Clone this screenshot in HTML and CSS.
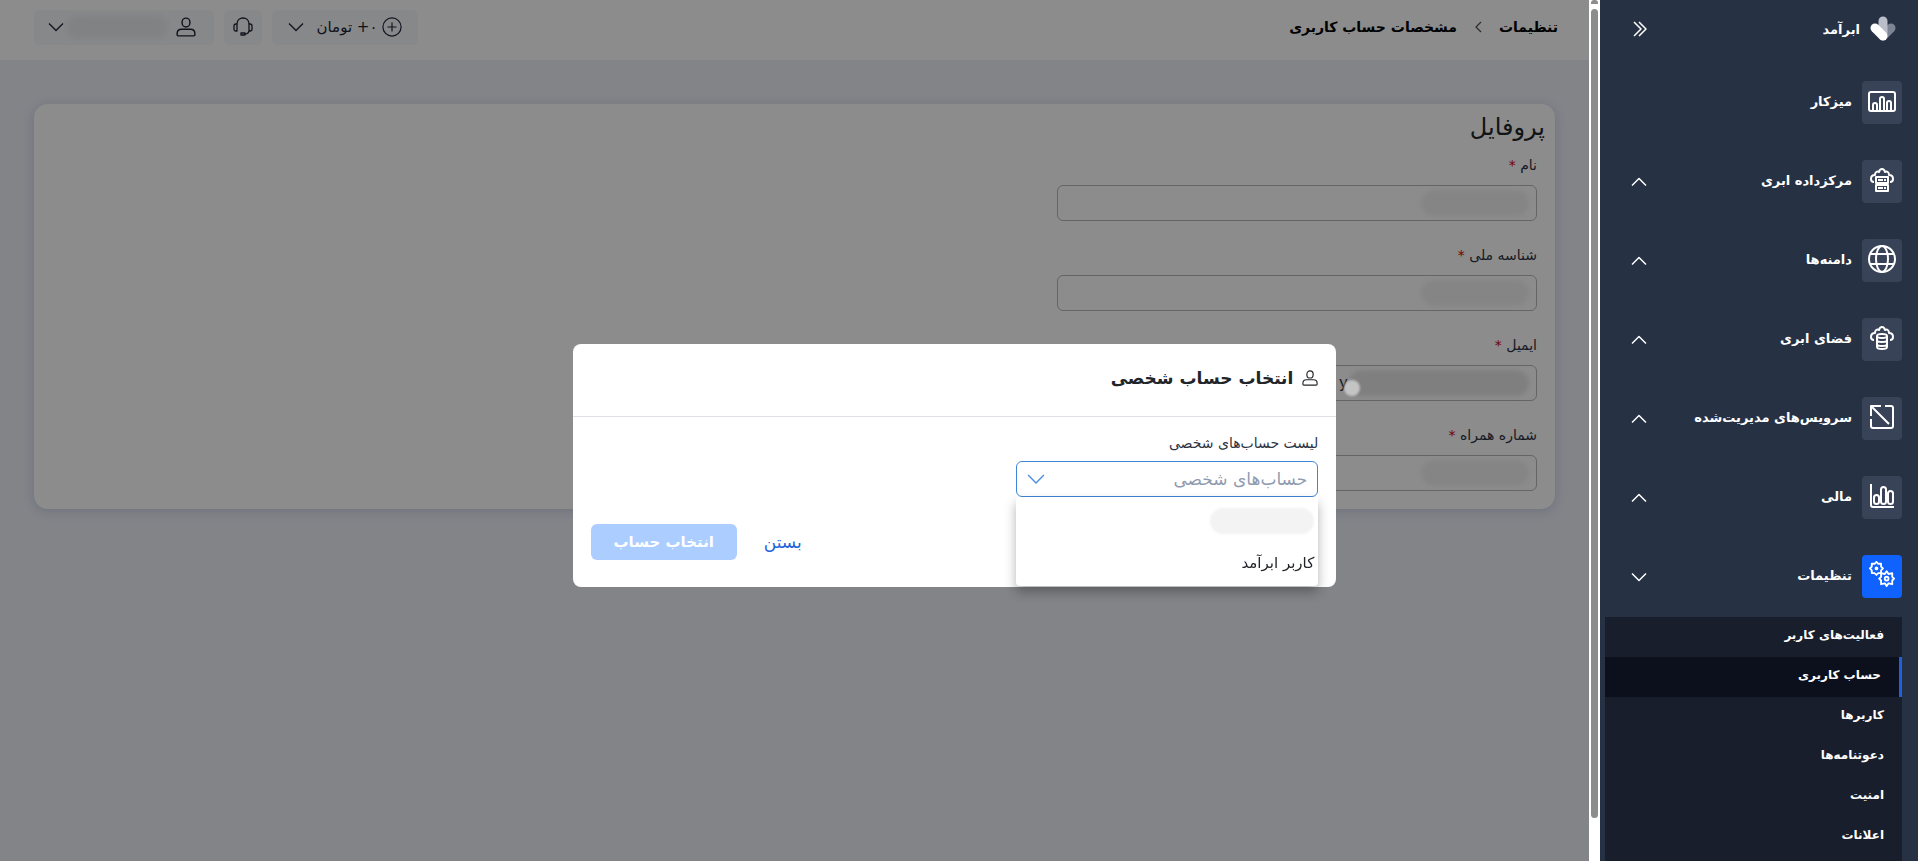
FILE: index.html
```html
<!DOCTYPE html>
<html lang="fa" dir="rtl">
<head>
  <meta charset="UTF-8" />
  <meta name="viewport" content="width=device-width, initial-scale=1.0"/>
  <title>ابرآمد - مشخصات حساب کاربری</title>
  <link rel="stylesheet" href="styles.css">
</head>
<body>
  <!-- Shared icons -->
  <svg class="sprite" aria-hidden="true">
    <symbol id="chevron" viewBox="0 0 16 16"><path d="M1 4.500l7 7 7-7"/></symbol>
    <symbol id="user" viewBox="0 0 18 18"><rect x="5.500" y="1" width="7" height="8" rx="3.500"/><path d="M5 11h8q4 0 4 4v1q0 1-1 1H2q-1 0-1-1v-1q0-4 4-4z"/></symbol>
  </svg>

  <!-- Sidebar -->
  <aside class="sidebar">
    <div class="brand">
      <svg class="logo" viewBox="0 0 26 26">
        <path d="M21 12l-8 8" stroke="#7d8594"/>
        <path d="M13 5v12" stroke="#b9bec8"/>
        <path d="M5 12l8 8" stroke="#fff"/>
      </svg>
      <span>ابرآمد</span>
      <button class="collapse" aria-label="بستن منو">
        <svg class="icon-16" viewBox="0 0 16 16"><path d="M2 1l7 7-7 7M7 1l7 7-7 7"/></svg>
      </button>
    </div>
    <nav>
      <ul class="menu">
        <li><a href="#dashboard">
          <span class="tile"><svg viewBox="0 0 28 28"><rect x="1" y="5" width="26" height="19" rx="2"/><path d="M5 23v-5q0-2 2-2t2 2v5M12 23V12q0-2 2-2t2 2v11M19 23v-7q0-2 2-2t2 2v7"/></svg></span>
          <span class="name">میزکار</span>
        </a></li>
        <li><a href="#datacenter">
          <span class="tile"><svg viewBox="0 0 28 28"><path d="M6 16c-2 0-3-1-3-3s1-4 4-4c0-3 2-4 4-3 1-4 5-4 6 0 2-1 4 0 4 3 3 0 4 2 4 4s-1 3-3 3"/><rect x="8" y="11" width="12" height="6"/><rect x="8" y="19" width="12" height="6"/><path d="M10 14h5M17 13v2M10 22h5M17 21v2"/></svg></span>
          <span class="name">مرکزداده ابری</span>
          <svg class="icon-16 up"><use href="#chevron"/></svg>
        </a></li>
        <li><a href="#domains">
          <span class="tile"><svg viewBox="0 0 28 28"><circle cx="14" cy="14" r="13"/><ellipse cx="14" cy="14" rx="6" ry="13"/><path d="M2 9h24M2 19h24"/></svg></span>
          <span class="name">دامنه‌ها</span>
          <svg class="icon-16 up"><use href="#chevron"/></svg>
        </a></li>
        <li><a href="#storage">
          <span class="tile"><svg viewBox="0 0 28 28"><path d="M6 16c-2 0-3-1-3-3s1-4 4-4c0-3 2-4 4-3 1-4 5-4 6 0 2-1 4 0 4 3 3 0 4 2 4 4s-1 3-3 3"/><ellipse cx="14" cy="12" rx="5" ry="2"/><path d="M9 12v11q0 2 5 2t5-2V12M9 16q0 2 5 2t5-2M9 20q0 2 5 2t5-2"/></svg></span>
          <span class="name">فضای ابری</span>
          <svg class="icon-16 up"><use href="#chevron"/></svg>
        </a></li>
        <li><a href="#managed">
          <span class="tile"><svg viewBox="0 0 28 28"><path d="M3 13V3h10M3 3l18 18M17 3h6q2 0 2 2v18q0 2-2 2H5q-2 0-2-2v-7"/></svg></span>
          <span class="name">سرویس‌های مدیریت‌شده</span>
          <svg class="icon-16 up"><use href="#chevron"/></svg>
        </a></li>
        <li><a href="#billing">
          <span class="tile"><svg viewBox="0 0 28 28"><path d="M3 2v21q0 2 2 2h21"/><rect x="6" y="13" width="5" height="9" rx="2.500"/><rect x="13" y="5" width="5" height="17" rx="2.500"/><rect x="20" y="9" width="5" height="13" rx="2.500"/></svg></span>
          <span class="name">مالی</span>
          <svg class="icon-16 up"><use href="#chevron"/></svg>
        </a></li>
        <li class="open"><a href="#settings">
          <span class="tile"><svg viewBox="0 0 28 28"><path d="M8 1l2 2 3 0 0 3 2 2-2 2 0 3-3 0-2 2-2-2-3 0 0-3-2-2 2-2 0-3 3 0z"/><circle cx="8" cy="8" r="1"/><path d="M19 11l2 3 4-1 0 4 2 2-2 2 0 4-4-1-2 3-2-3-4 1 0-4-2-2 2-2 0-4 4 1z"/><circle cx="19" cy="19" r="2"/></svg></span>
          <span class="name">تنظیمات</span>
          <svg class="icon-16"><use href="#chevron"/></svg>
        </a></li>
      </ul>
      <ul class="submenu">
        <li><a href="#activity">فعالیت‌های کاربر</a></li>
        <li><a href="#account" class="active">حساب کاربری</a></li>
        <li><a href="#users">کاربرها</a></li>
        <li><a href="#invites">دعوتنامه‌ها</a></li>
        <li><a href="#security">امنیت</a></li>
        <li><a href="#notices">اعلانات</a></li>
      </ul>
    </nav>
  </aside>

  <!-- Scroll bar -->
  <div class="scrollbar">
    <div class="scroll-arrow"></div>
    <div class="thumb"></div>
  </div>

  <!-- Page -->
  <div class="page">
    <header class="topbar">
      <nav class="breadcrumb">
        <a href="#settings">تنظیمات</a>
        <svg class="crumb" viewBox="0 0 10 14"><path d="M8 2L3 7l5 5"/></svg>
        <a href="#account">مشخصات حساب کاربری</a>
      </nav>
      <div class="tools">
        <button class="tool balance">
          <svg class="icon-20" viewBox="0 0 22 22"><circle cx="11" cy="11" r="10"/><path d="M11 6v10M6 11h10"/></svg>
          <span>۰+ تومان</span>
          <svg class="icon-16"><use href="#chevron"/></svg>
        </button>
        <button class="tool support" aria-label="پشتیبانی">
          <svg class="icon-20" viewBox="0 0 20 20"><path d="M4 7c0-8 12-8 12 0M4 6v8H3q-2 0-2-2V9q0-2 2-2h1M16 6v8h1q2 0 2-2V9q0-2-2-2h-1M16 13q0 4-4 4M8 16h4v2H8z"/></svg>
        </button>
        <button class="tool account">
          <svg class="icon-20"><use href="#user"/></svg>
          <span class="redacted user-name"></span>
          <svg class="icon-16"><use href="#chevron"/></svg>
        </button>
      </div>
    </header>

    <main class="card">
      <h1>پروفایل</h1>
      <form class="fields">
        <div class="field">
          <label for="name">نام <b>*</b></label>
          <input type="text" id="name">
          <span class="redacted"></span>
        </div>
        <div class="field">
          <label for="national-id">شناسه ملی <b>*</b></label>
          <input type="text" id="national-id">
          <span class="redacted"></span>
        </div>
        <div class="field">
          <label for="email">ایمیل <b>*</b></label>
          <input type="email" id="email" class="email" value="y">
          <span class="redacted wide"></span>
          <span class="redacted dot"></span>
        </div>
        <div class="field">
          <label for="mobile">شماره همراه <b>*</b></label>
          <input type="tel" id="mobile">
          <span class="redacted"></span>
        </div>
      </form>
    </main>
  </div>

  <!-- Account picker modal -->
  <div class="overlay">
    <div class="modal" role="dialog" aria-labelledby="modal-title">
      <div class="modal-header">
        <svg class="icon-16"><use href="#user"/></svg>
        <h2 id="modal-title">انتخاب حساب شخصی</h2>
      </div>
      <div class="modal-body">
        <label for="accounts">لیست حساب‌های شخصی</label>
        <div class="select">
          <select id="accounts">
            <option>حساب‌های شخصی</option>
          </select>
          <svg class="icon-18"><use href="#chevron"/></svg>
          <ul class="options">
            <li><span class="redacted"></span></li>
            <li>کاربر ابرآمد</li>
          </ul>
        </div>
      </div>
      <div class="modal-footer">
        <button class="link">بستن</button>
        <button class="primary" disabled>انتخاب حساب</button>
      </div>
    </div>
  </div>
</body>
</html>
```
FILE: styles.css
```css
/* Reset */
* {
  margin: 0;
  padding: 0;
  box-sizing: border-box;
}
body {
  display: flex;
  height: 100vh;
  overflow: hidden;
  font-family: "DejaVu Sans", sans-serif;
  font-size: 15px;
  background-color: #eef0f8;
  color: #212529;
}
a {
  color: inherit;
  text-decoration: none;
}
ul {
  list-style: none;
}
button, input, select {
  font: inherit;
  color: inherit;
  background: none;
  border: none;
}
svg {
  flex: none;
  fill: none;
  stroke: currentColor;
  stroke-width: 1.3;
  stroke-linejoin: round;
}
.sprite {
  position: absolute;
  width: 0;
  height: 0;
}
.icon-16 {
  width: 16px;
  height: 16px;
}
.icon-18 {
  width: 18px;
  height: 18px;
}
.icon-20 {
  width: 20px;
  height: 20px;
}
.up {
  transform: rotate(180deg);
}

/* Sidebar */
.sidebar {
  position: relative;
  z-index: 20;
  flex: none;
  width: 318px;
  overflow: hidden;
  background-color: #263143;
  color: #fff;
  font-size: 13px;
  font-weight: bold;
}
.sidebar .icon-16 {
  stroke-width: 1.5;
}
.brand {
  display: flex;
  align-items: center;
  gap: 10px;
  height: 58px;
  padding: 0 22px 0 32px;
}
.brand .logo {
  width: 26px;
  height: 26px;
  stroke-width: 9;
  stroke-linecap: round;
}
.collapse {
  display: flex;
  margin-right: auto;
}
.menu {
  display: flex;
  flex-direction: column;
  gap: 36px;
  padding: 23px 16px 19px 31px;
}
.menu a {
  display: flex;
  align-items: center;
  gap: 10px;
}
.menu .name {
  flex: 1;
  padding-bottom: 2px;
}
.tile {
  display: flex;
  justify-content: center;
  width: 40px;
  height: 43px;
  padding-top: 6px;
  border-radius: 4px;
  background-color: #384357;
}
.tile svg {
  width: 28px;
  height: 28px;
  stroke-width: 2;
}
.open .tile {
  background-color: #0f62fe;
}
.open .tile svg {
  width: 26px;
  height: 26px;
}
.submenu {
  height: 280px;
  margin: 0 16px 0 5px;
  background-color: #181e2b;
  font-size: 12px;
}
.submenu a {
  display: flex;
  align-items: center;
  height: 40px;
  padding: 0 18px 4px;
}
.submenu .active {
  border-right: 3px solid #1f5fe0;
  background-color: #0c101d;
}

/* Scroll bar */
.scrollbar {
  position: relative;
  z-index: 20;
  flex: none;
  width: 11px;
  padding: 0 2px;
  background-color: #fff;
}
.scroll-arrow {
  height: 4px;
  margin-bottom: 5px;
  border-radius: 3px 3px 0 0;
  background-color: #8b8d8c;
}
.thumb {
  height: 94%;
  border-radius: 4px;
  background-color: #8b8d8c;
}

/* Top bar */
.page {
  flex: 1;
}
.topbar {
  display: flex;
  align-items: center;
  justify-content: space-between;
  height: 60px;
  padding: 0 31px 6px 34px;
  background-color: #fff;
}
.breadcrumb {
  display: flex;
  align-items: center;
  gap: 16px;
  color: #000;
  font-size: 14px;
  font-weight: bold;
}
.crumb {
  width: 10px;
  height: 14px;
  color: #555;
}
.tools {
  display: flex;
  gap: 10px;
}
.tool {
  display: flex;
  align-items: center;
  justify-content: center;
  height: 35px;
  border-radius: 6px;
  background-color: #f4f7fb;
  color: #1c2434;
}
.balance {
  gap: 5px;
  width: 146px;
}
.balance .icon-16 {
  margin-right: 8px;
}
.support {
  width: 38px;
}
.account {
  width: 180px;
  padding: 0 18px 0 14px;
}
.account .icon-16 {
  margin-right: auto;
}

/* Smudged out values */
.redacted {
  display: block;
  width: 108px;
  height: 26px;
  border-radius: 14px;
  background-color: #f3f3f3;
  filter: blur(2px);
}
.user-name {
  width: 100px;
  height: 22px;
  margin-right: 9px;
  background-color: #ebedf0;
}

/* Profile card */
.card {
  margin: 44px 34px;
  padding: 8px 10px 18px;
  border-radius: 14px;
  background-color: #fff;
  box-shadow: 0 2px 12px #c8cfe6;
}
h1 {
  font-size: 24px;
  font-weight: normal;
  line-height: 30px;
}
.fields {
  display: grid;
  gap: 24px;
  width: 32%;
  margin: 13px 8px 0 0;
}
.field {
  position: relative;
}
label {
  display: block;
  font-size: 14px;
  line-height: 20px;
  color: #2c3344;
}
label b {
  color: #d40000;
  font-weight: normal;
}
.field input {
  display: block;
  width: 100%;
  height: 36px;
  margin-top: 10px;
  padding: 0 8px;
  border: 1px solid #b8b8bc;
  border-radius: 6px;
}
.field .email {
  padding-right: 188px;
}
.field .redacted {
  position: absolute;
  right: 8px;
  bottom: 5px;
}
.field .wide {
  width: 180px;
  background-color: #e8e8e8;
}
.field .dot {
  right: 177px;
  z-index: 11;
  width: 16px;
  height: 16px;
  background-color: #c4c4c4;
  filter: blur(1px);
}

/* Modal */
.overlay {
  position: fixed;
  inset: 0;
  z-index: 10;
  padding: 40vh 9px 0 0;
  background-color: rgba(0, 0, 0, 0.45);
}
.modal {
  width: 40%;
  margin: 0 auto;
  border-radius: 8px;
  background-color: #fff;
}
.modal-header {
  display: flex;
  align-items: center;
  gap: 9px;
  height: 73px;
  padding: 0 18px 4px;
  border-bottom: 1px solid #dee2e6;
}
h2 {
  font-size: 17px;
}
.modal-body {
  padding: 16px 18px 0;
}
.select {
  position: relative;
  width: 302px;
  margin-top: 8px;
}
.select select {
  appearance: none;
  display: block;
  width: 100%;
  height: 36px;
  padding: 0 10px;
  border: 1px solid #3f86d8;
  border-radius: 6px;
  font-size: 17px;
  color: #8f9bb0;
}
.select .icon-18 {
  position: absolute;
  left: 11px;
  top: 9px;
  color: #4f90de;
}
.options {
  position: absolute;
  top: 36px;
  left: 0;
  right: 0;
  padding: 3px 4px 2px;
  border-radius: 0 0 4px 4px;
  background-color: #fff;
  box-shadow: 0 6px 12px rgba(0, 0, 0, 0.3);
}
.options li {
  display: flex;
  align-items: center;
  height: 42px;
}
.options .redacted {
  width: 104px;
  filter: blur(1px);
}
.modal-footer {
  display: flex;
  justify-content: flex-end;
  gap: 27px;
  padding: 27px 18px;
}
.link {
  color: #2563d9;
  font-size: 17px;
}
.primary {
  width: 146px;
  height: 36px;
  border-radius: 6px;
  background-color: #abcdff;
  color: #fff;
  font-weight: bold;
}
```
